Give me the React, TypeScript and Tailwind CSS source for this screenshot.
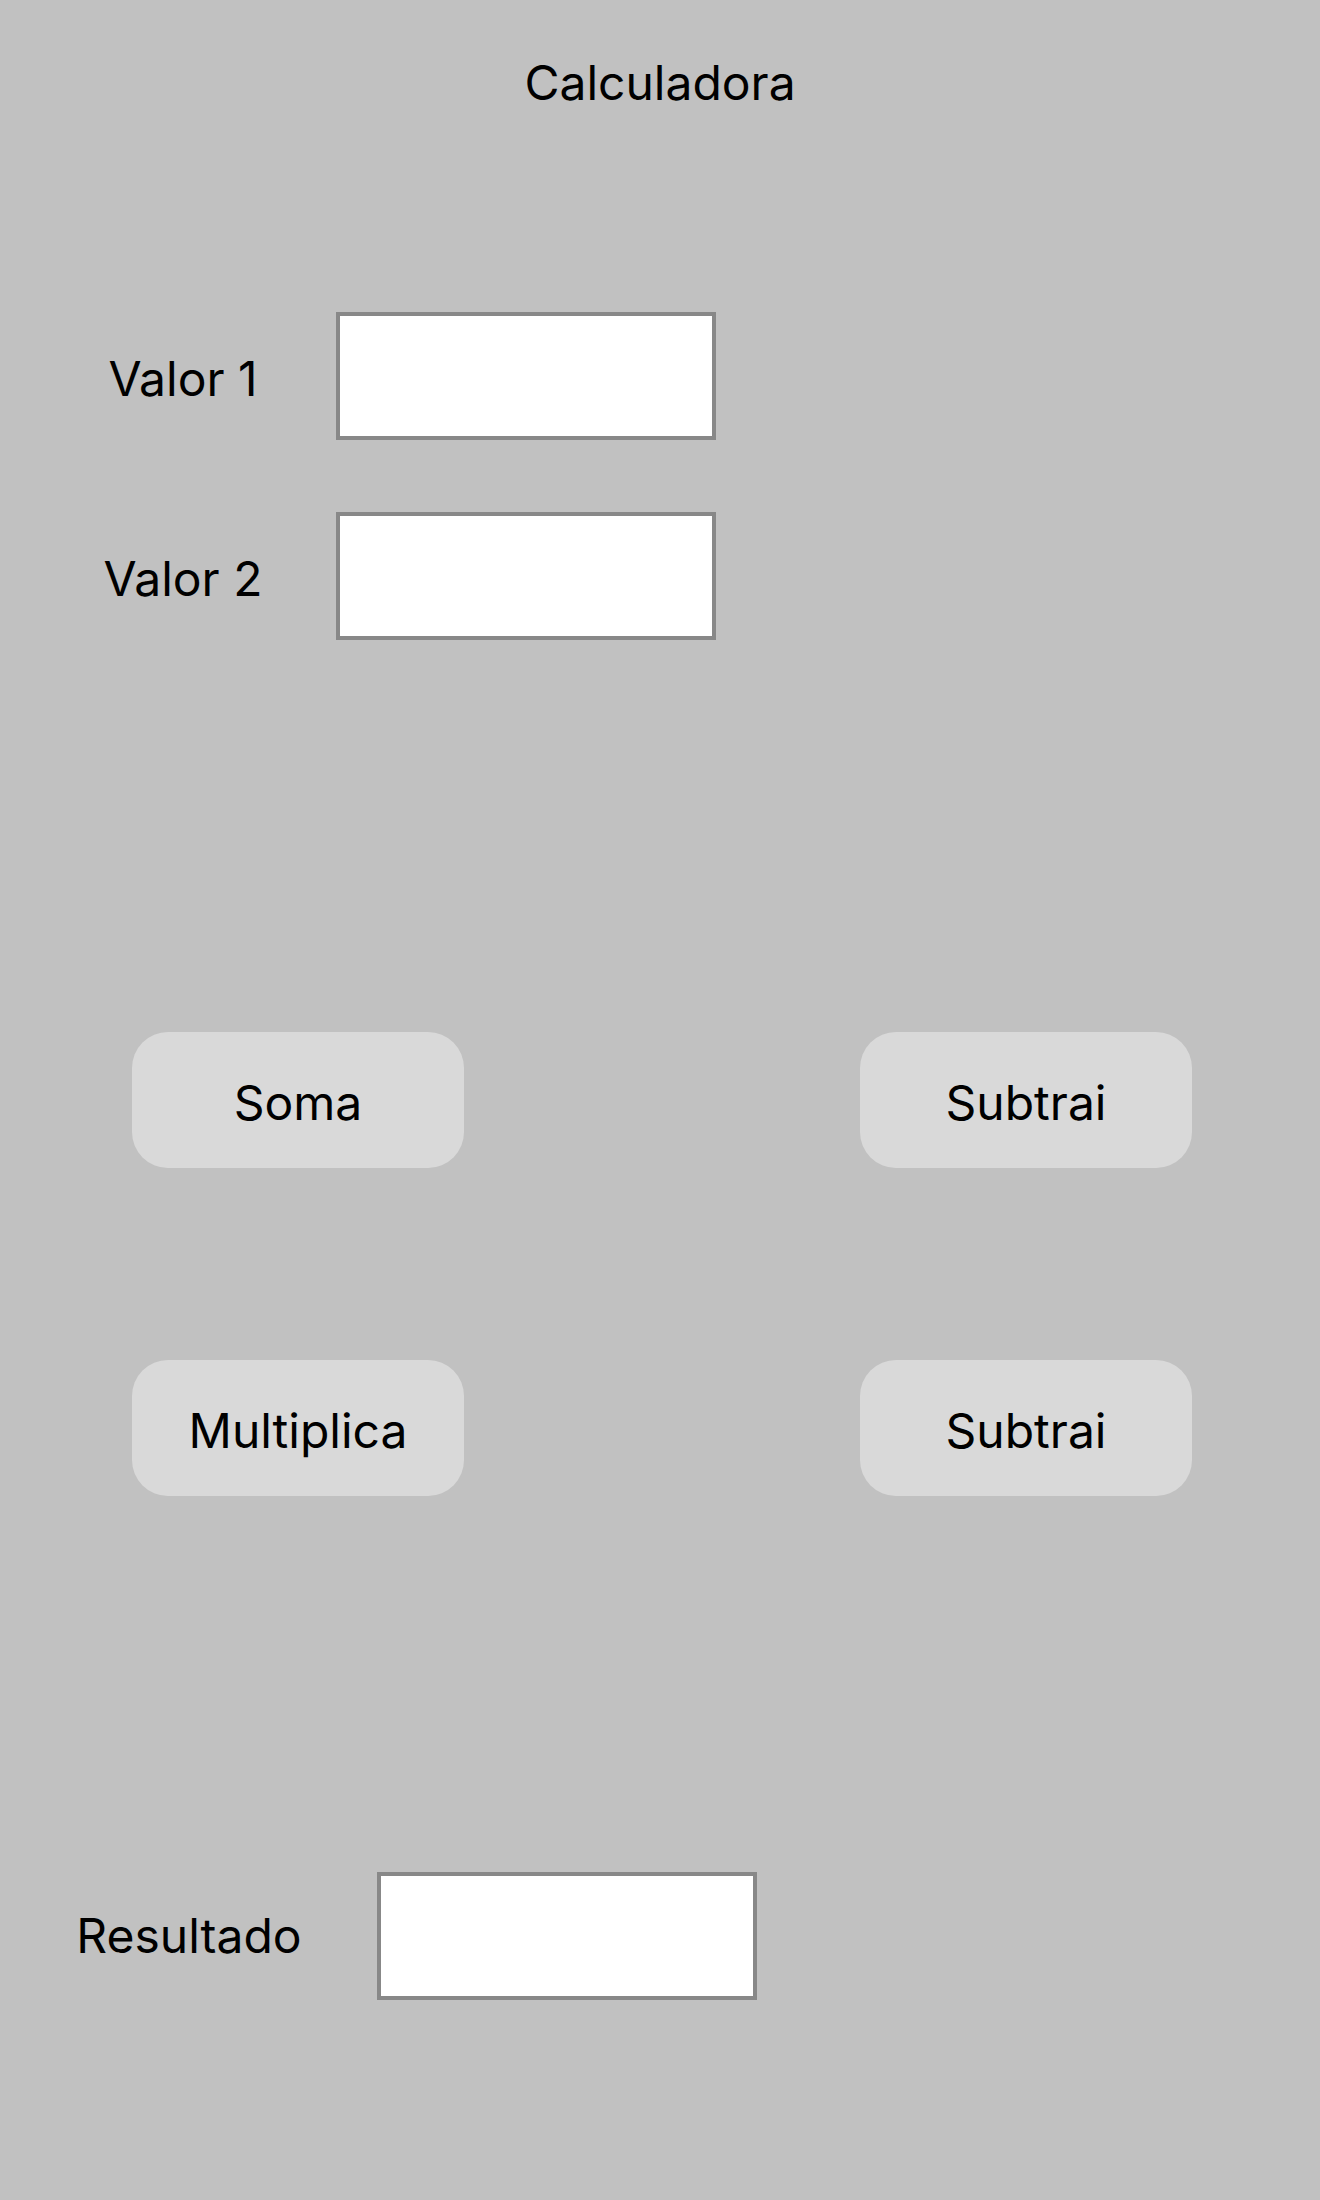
import React from 'react';

const Field: React.FC<{ label: string; labelClass: string; boxClass: string }> = ({
  label,
  labelClass,
  boxClass,
}) => (
  <div className="flex items-center h-[128px]">
    <div className={`text-center text-[48px] leading-[58px] text-black ${labelClass}`}>{label}</div>
    <div className={`w-[380px] h-[128px] bg-white border-4 border-[#888888] ${boxClass}`} />
  </div>
);

const Btn: React.FC<{ text: string }> = ({ text }) => (
  <button
    type="button"
    className="w-[332px] h-[136px] rounded-[36px] bg-[#d9d9d9] text-[48px] leading-[58px] pt-[5px] text-black flex items-center justify-center"
  >
    {text}
  </button>
);

export default function App() {
  return (
    <div
      className="w-[1320px] h-[2200px] bg-[#c1c1c1] flex flex-col"
      style={{ fontFamily: 'Inter, "Noto Sans", sans-serif' }}
    >
      <h1 className="pt-[54px] text-center text-[48px] leading-[58px] font-normal text-black">
        Calculadora
      </h1>

      <div className="mt-[200px] flex flex-col gap-[72px]">
        <Field label="Valor 1" labelClass="ml-[70px] w-[226px] pt-[5px]" boxClass="ml-[40px]" />
        <Field label="Valor 2" labelClass="ml-[70px] w-[226px] pt-[5px]" boxClass="ml-[40px]" />
      </div>

      <div className="mt-[392px] flex flex-col gap-[192px] pl-[132px]">
        <div className="flex gap-[396px]">
          <Btn text="Soma" />
          <Btn text="Subtrai" />
        </div>
        <div className="flex gap-[396px]">
          <Btn text="Multiplica" />
          <Btn text="Subtrai" />
        </div>
      </div>

      <div className="mt-[376px]">
        <Field label="Resultado" labelClass="ml-[66px] w-[246px]" boxClass="ml-[65px]" />
      </div>
    </div>
  );
}
